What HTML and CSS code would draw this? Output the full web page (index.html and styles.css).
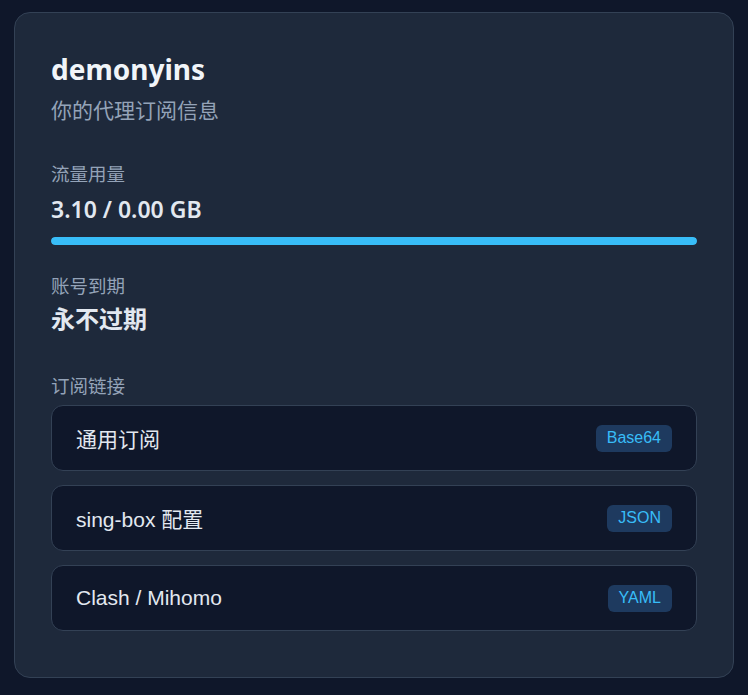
FILE: index.html
```html
<!DOCTYPE html>
<html lang="zh-CN">
<head>
<meta charset="utf-8">
<title>demonyins</title>
<link rel="stylesheet" href="styles.css">
</head>
<body>
<main class="card">
  <h1 class="title">demonyins</h1>
  <p class="subtitle">你的代理订阅信息</p>

  <section class="block block-usage">
    <div class="label">流量用量</div>
    <div class="value value-num">3.10 / 0.00 GB</div>
    <div class="bar"><div class="bar-fill" style="width:100%"></div></div>
  </section>

  <section class="block block-expire">
    <div class="label">账号到期</div>
    <div class="value value-cjk">永不过期</div>
  </section>

  <section class="block links">
    <div class="label">订阅链接</div>
    <a class="item" href="#"><span class="item-name">通用订阅</span><span class="badge">Base64</span></a>
    <a class="item" href="#"><span class="item-name">sing-box 配置</span><span class="badge">JSON</span></a>
    <a class="item" href="#"><span class="item-name">Clash / Mihomo</span><span class="badge">YAML</span></a>
  </section>
</main>
</body>
</html>
```

FILE: styles.css
```css
* { box-sizing: border-box; }
html, body { margin: 0; }
body {
  background: #0f172a;
  padding: 12px 14px;
  font-family: "Noto Sans", "Noto Sans CJK SC", sans-serif;
  color: #e2e8f0;
}
.card {
  background: #1e293b;
  border: 1px solid #334155;
  border-radius: 16px;
  padding: 36px 36px 32px;
}
.title {
  margin: 0;
  font-size: 28px;
  font-weight: 700;
  line-height: 40px;
  color: #f1f5f9;
}
.subtitle {
  margin: 6px 0 0;
  font-size: 21px;
  line-height: 30px;
  color: #94a3b8;
}
.block-usage { margin-top: 36px; }
.block-expire { margin-top: 28px; }
.links { margin-top: 39px; }
.label {
  font-size: 18.5px;
  line-height: 26px;
  color: #94a3b8;
}
.value {
  font-size: 23px;
  font-weight: 600;
  line-height: 30px;
  color: #e2e8f0;
}
.value-num { margin-top: 7px; }
.value-cjk {
  margin-top: 5px;
  font-size: 24px;
  font-weight: 700;
}
.bar {
  margin-top: 13px;
  height: 8px;
  border-radius: 4px;
  background: #334155;
  overflow: hidden;
}
.bar-fill {
  height: 100%;
  background: #38bdf8;
  border-radius: 4px;
}
.links .label { margin-bottom: 6px; }
.item {
  display: flex;
  align-items: center;
  justify-content: space-between;
  height: 66px;
  padding: 0 24px;
  margin-bottom: 14px;
  background: #0f172a;
  border: 1px solid #334155;
  border-radius: 12px;
  text-decoration: none;
  font-family: "Liberation Sans", "Noto Sans CJK SC", sans-serif;
  font-size: 21px;
  color: #e2e8f0;
}
.badge {
  display: inline-flex;
  align-items: center;
  height: 27px;
  padding: 0 11px;
  border-radius: 6px;
  background: #1e3a5f;
  color: #38bdf8;
  font-size: 16px;
}
```
